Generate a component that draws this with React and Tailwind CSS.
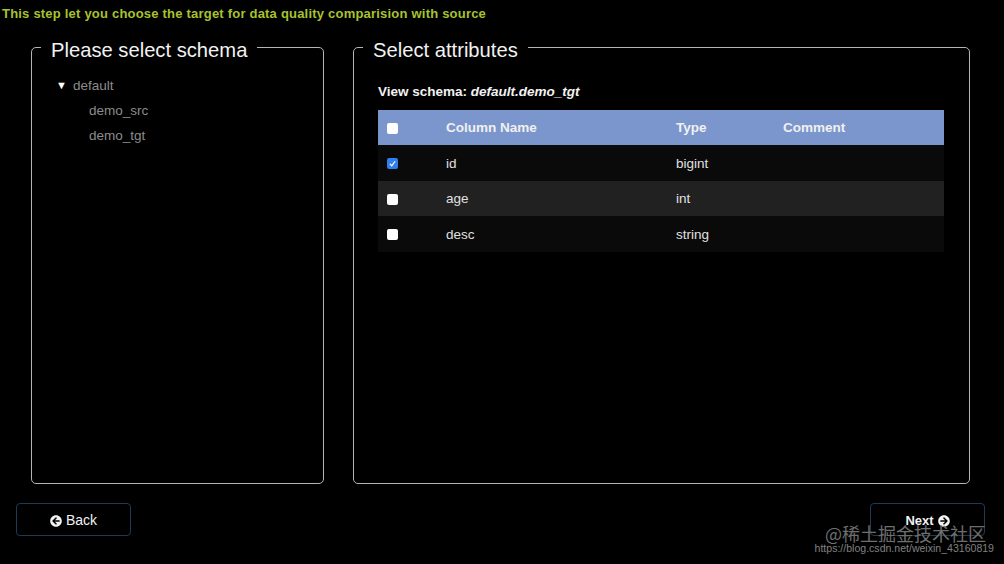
import React from "react";
import { FaArrowCircleLeft, FaArrowCircleRight } from "react-icons/fa";

const rows = [
  { name: "id", type: "bigint", checked: true, bg: "bg-[#0a0a0a]" },
  { name: "age", type: "int", checked: false, bg: "bg-[#212121]" },
  { name: "desc", type: "string", checked: false, bg: "bg-[#0a0a0a]" },
];

function Box({ checked }) {
  return (
    <span className={`flex h-[11px] w-[11px] items-center justify-center rounded-[2px] ${checked ? "bg-[#2f80ed]" : "bg-white"}`}>
      {checked && (
        <svg viewBox="0 0 12 12" className="h-[9px] w-[9px]" fill="none" stroke="white" strokeWidth="1.6">
          <path d="M2.5 6.5 L5 9 L9.5 3" />
        </svg>
      )}
    </span>
  );
}

function Panel({ title, className, children }) {
  return (
    <fieldset className={`h-[444px] rounded-[5px] border border-[#b5b5b5] ${className}`}>
      <legend className="ml-[9px] px-[10px] pt-[7px] text-[20.2px] leading-[7px] text-[#f2f2f2]">{title}</legend>
      {children}
    </fieldset>
  );
}

function Btn({ children, className }) {
  return (
    <button className={`flex h-[33px] w-[115px] items-center justify-center gap-1 rounded-[4px] border border-[#1f3a55] pt-[2px] text-[#f2f2f2] ${className}`}>
      {children}
    </button>
  );
}

export default function App() {
  return (
    <div className="relative h-[564px] w-[1004px] overflow-hidden bg-black font-['Liberation_Sans',Arial,sans-serif]">
      <p className="pl-[2px] pt-[6px] text-[13px] leading-[16px] font-bold tracking-[0.21px] text-[#a8c22e]">
        This step let you choose the target for data quality comparision with source
      </p>
      <div className="mt-[18px] flex gap-[29px] pl-[31px]">
        <Panel title="Please select schema" className="w-[293px]">
          <div className="pl-[24px] pt-[19px] text-[13.5px] leading-[25px] text-[#8c8c8c]">
            <div className="flex items-center">
              <span className="w-[17px] text-[11px] text-white">▼</span>
              <span>default</span>
            </div>
            <div className="pl-[33px]">demo_src</div>
            <div className="pl-[33px]">demo_tgt</div>
          </div>
        </Panel>
        <Panel title="Select attributes" className="w-[617px]">
          <div className="px-[24px] pt-[30px]">
            <div className="mb-[10px] text-[13.5px] leading-[16px] font-bold text-[#f2f2f2]">
              View schema: <i>default.demo_tgt</i>
            </div>
            <div className="w-[566px] text-[13.5px] text-[#e0e0e0]">
              <div className="flex h-[35px] items-center bg-[#7b96cc] pt-[2px] font-bold text-[#f0f0f0]">
                <div className="w-[68px] pl-[9px]"><Box /></div>
                <div className="w-[230px]">Column Name</div>
                <div className="w-[107px]">Type</div>
                <div>Comment</div>
              </div>
              {rows.map((r) => (
                <div key={r.name} className={`flex h-[35.5px] items-center pt-[2px] ${r.bg}`}>
                  <div className="w-[68px] pl-[9px]"><Box checked={r.checked} /></div>
                  <div className="w-[230px]">{r.name}</div>
                  <div className="w-[107px]">{r.type}</div>
                </div>
              ))}
            </div>
          </div>
        </Panel>
      </div>
      <div className="mt-[19px] flex justify-between pl-[16px] pr-[19px]">
        <Btn className="text-[14px]"><FaArrowCircleLeft className="text-[12px]" /> Back</Btn>
        <Btn className="text-[13px] font-bold"><span>Next</span> <FaArrowCircleRight className="text-[12px]" /></Btn>
      </div>
      <div className="absolute right-[18px] top-[522px] text-[18px] leading-[22px] text-[#6e6e6e] font-['Noto_Sans_CJK_SC',sans-serif]">@稀土掘金技术社区</div>
      <div className="absolute right-[10px] top-[541px] text-[10.55px] leading-[14px] text-[#808080]">https://blog.csdn.net/weixin_43160819</div>
    </div>
  );
}
